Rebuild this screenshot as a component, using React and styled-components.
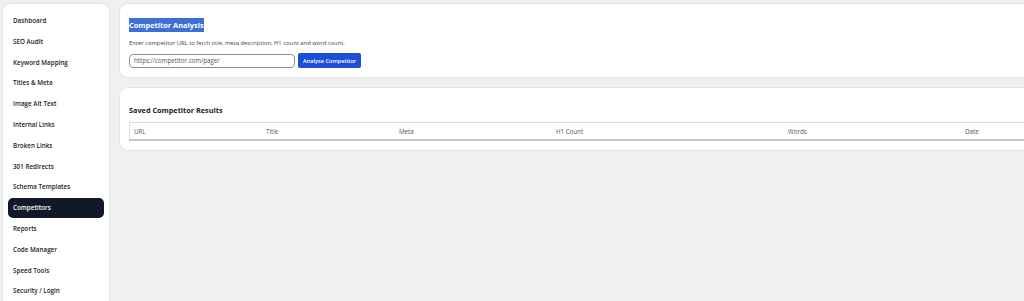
import React, { useState } from 'react';
import styled, { createGlobalStyle } from 'styled-components';

const GlobalStyle = createGlobalStyle`
  html, body {
    margin: 0;
    padding: 0;
    background: #f0f0f1;
    overflow: hidden;
  }
  body {
    font-family: 'Open Sans', 'Noto Sans', sans-serif;
  }
`;

const menu = [
    'Dashboard',
    'SEO Audit',
    'Keyword Mapping',
    'Titles & Meta',
    'Image Alt Text',
    'Internal Links',
    'Broken Links',
    '301 Redirects',
    'Schema Templates',
    'Competitors',
    'Reports',
    'Code Manager',
    'Speed Tools',
    'Security / Login',
];

// 표 머리글 (너비는 px, 마지막 열은 나머지)
const columns = [
    { label: 'URL', width: 124 },
    { label: 'Title', width: 125 },
    { label: 'Meta', width: 149 },
    { label: 'H1 Count', width: 224 },
    { label: 'Words', width: 169 },
    { label: 'Date' },
];

const App = () => {
    const [active] = useState('Competitors');
    const [url, setUrl] = useState('');

    return (
        <>
            <GlobalStyle />
            <Layout>
                <Sidebar>
                    {menu.map((item) => (
                        <MenuItem key={item} $active={item === active}>{item}</MenuItem>
                    ))}
                </Sidebar>
                <Main>
                    <Card $pad="15px 9px 9px">
                        <Title><Selected>Competitor Analysis</Selected></Title>
                        <Help>Enter competitor URL to fetch title, meta description, H1 count and word count.</Help>
                        <FormRow>
                            <UrlInput
                                placeholder="https://competitor.com/page/"
                                value={url}
                                onChange={(e) => setUrl(e.target.value)}
                            />
                            <PrimaryButton>Analyse Competitor</PrimaryButton>
                        </FormRow>
                    </Card>
                    <Card $pad="16px 9px 9px">
                        <SubTitle>Saved Competitor Results</SubTitle>
                        <Table>
                            <thead>
                                <tr>
                                    {columns.map((c) => (
                                        <Th key={c.label} $width={c.width}>{c.label}</Th>
                                    ))}
                                </tr>
                            </thead>
                        </Table>
                    </Card>
                </Main>
            </Layout>
        </>
    );
};

const Layout = styled.div`
  display: flex;
  align-items: flex-start;
  gap: 11px;
  padding: 4px 0 0 3px;
  width: 1100px;
  height: 301px;
  box-sizing: border-box;
`;

const Sidebar = styled.nav`
  flex: 0 0 106px;
  background: #fff;
  border-radius: 8px;
  box-shadow: 0 0 0 1px #e6e6e8;
  padding: 7px 5px 20px;
  box-sizing: border-box;
  display: flex;
  flex-direction: column;
  gap: 1px;
`;

const MenuItem = styled.div`
  height: 19.8px;
  line-height: 19.8px;
  padding: 0 5px;
  border-radius: 5px;
  font-size: 6.3px;
  font-weight: 600;
  color: ${(p) => (p.$active ? '#fff' : '#1d2327')};
  background: ${(p) => (p.$active ? '#111827' : 'transparent')};
  white-space: nowrap;
`;

const Main = styled.div`
  flex: 1;
  display: flex;
  flex-direction: column;
  gap: 11px;
`;

const Card = styled.section`
  background: #fff;
  border-radius: 8px;
  box-shadow: 0 0 0 1px #e3e3e6;
  padding: ${(p) => p.$pad};
`;

const Title = styled.h2`
  margin: 0 0 8px;
  font-size: 7.4px;
  font-weight: 700;
  line-height: 12px;
  color: #1d2327;
`;

const Selected = styled.span`
  background: #3d6fd6;
  color: #fff;
  padding: 2px 0;
`;

const Help = styled.p`
  margin: 0 0 6px;
  font-size: 5.85px;
  color: #3c434a;
  line-height: 8px;
`;

const FormRow = styled.div`
  display: flex;
  align-items: center;
  gap: 3px;
`;

const UrlInput = styled.input`
  width: 166px;
  height: 14px;
  box-sizing: border-box;
  border: 1px solid #8c8f94;
  border-radius: 4px;
  padding: 0 4px;
  font-family: inherit;
  font-size: 6.2px;
  color: #2c3338;
  outline: none;

  &::placeholder {
    color: #50575e;
  }
`;

const PrimaryButton = styled.button`
  height: 15px;
  padding: 0 5px;
  background: #1d4ed8;
  color: #fff;
  border: none;
  border-radius: 2px;
  font-family: inherit;
  font-size: 5.6px;
  font-weight: 600;
  cursor: pointer;
`;

const SubTitle = styled.h3`
  margin: 0 0 6px;
  font-size: 7.3px;
  font-weight: 700;
  line-height: 12px;
  color: #1d2327;
`;

const Table = styled.table`
  width: 100%;
  border-collapse: collapse;
  table-layout: fixed;
  border: 1px solid #dcdcde;
  border-bottom: 2px solid #c9c9cc;
`;

const Th = styled.th`
  width: ${(p) => (p.$width ? `${p.$width}px` : 'auto')};
  height: 16px;
  padding: 0 4px;
  text-align: left;
  font-size: 6.2px;
  font-weight: 400;
  color: #50575e;
`;

export default App;
